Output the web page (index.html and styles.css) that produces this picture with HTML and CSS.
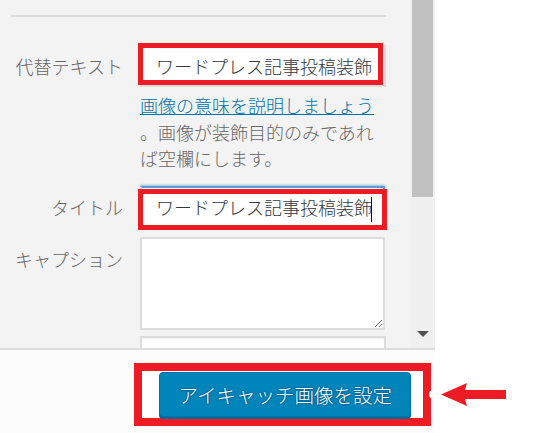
FILE: index.html
```html
<!DOCTYPE html>
<html lang="ja">
<head>
    <meta charset="UTF-8">
    <meta name="viewport" content="width=device-width, initial-scale=1.0">
    <title>アイキャッチ画像</title>
    <link rel="stylesheet" href="styles.css">
</head>
<body>
    <div class="frame">
        <div class="modal">
            <div class="panel">
                <div class="details">
                    <hr class="divider">

                    <div class="setting setting--alt">
                        <label class="setting-label">代替テキスト</label>
                        <div class="text-input">
                            ワードプレス記事投稿装飾
                            <span class="mark mark--alt"></span>
                        </div>
                    </div>

                    <p class="description"><a href="#">画像の意味を説明しましょう</a><br>。画像が装飾目的のみであれ<br>ば空欄にします。</p>

                    <div class="setting setting--title">
                        <label class="setting-label">タイトル</label>
                        <div class="text-input text-input--focus">
                            ワードプレス記事投稿装飾<span class="caret"></span>
                            <span class="mark mark--title"></span>
                        </div>
                    </div>

                    <div class="setting setting--caption">
                        <label class="setting-label">キャプション</label>
                        <textarea class="caption-input"></textarea>
                    </div>

                    <div class="setting setting--more">
                        <label class="setting-label"></label>
                        <div class="text-input"></div>
                    </div>
                </div>

                <div class="scrollbar">
                    <div class="scroll-thumb"></div>
                    <div class="scroll-arrow"></div>
                </div>
            </div>

            <div class="toolbar">
                <div class="button-wrap">
                    <button class="button-primary">アイキャッチ画像を設定</button>
                    <span class="handle"></span>
                </div>
            </div>
        </div>

        <!-- annotation arrow -->
        <svg class="arrow" width="66" height="23" viewBox="0 0 66 23">
            <path d="M0 11.5 L26 0 L24 7 L65 7 L65 16 L24 16 L26 23 Z" fill="#ed1c24"/>
        </svg>
    </div>
</body>
</html>
```

FILE: styles.css
```css
/* base */
body {
    margin: 0;
    background: #fff;
    font-family: "Noto Sans CJK JP", "Noto Sans", sans-serif;
    font-weight: 300;
}

.frame {
    position: relative;
    width: 549px;
    height: 433px;
    overflow: hidden;
}

.modal {
    width: 435px;
    height: 433px;
    display: flex;
    flex-direction: column;
}

/* panel + scrollbar */
.panel {
    height: 348px;
    display: flex;
    background: #f3f3f3;
    overflow: hidden;
}

.details {
    width: 375px;
    padding: 15px 25px 0 11px;
}

.divider {
    margin: 0;
    border: 0;
    height: 2px;
    background: #dddddd;
}

.setting {
    display: flex;
    align-items: center;
    gap: 17px;
}

.setting-label {
    width: 112px;
    flex: none;
    text-align: right;
    font-size: 18px;
    line-height: 26px;
    color: #666;
}

.setting--alt { margin-top: 28px; }
.setting--title { margin-top: 14px; }
.setting--caption { margin-top: 9px; align-items: flex-start; }
.setting--caption .setting-label { padding-top: 9px; }
.setting--more { margin-top: 6px; }

.text-input {
    position: relative;
    box-sizing: border-box;
    width: 246px;
    height: 42px;
    padding: 0 14px;
    border: 2px solid #dddddd;
    background: #fff;
    font-size: 18px;
    line-height: 38px;
    color: #32373c;
    white-space: nowrap;
    box-shadow: inset 0 1px 2px rgba(0,0,0,0.07);
}

.text-input--focus {
    width: 245px;
    border-color: #dddddd;
    border-top-color: #5b9dd9;
    border-right-color: #5b9dd9;
    box-shadow: 0 -1px 2px rgba(30,140,190,0.5);
}

.caret {
    display: inline-block;
    width: 1px;
    height: 25px;
    margin-left: -1px;
    background: #111;
    vertical-align: middle;
}

/* red annotation frames */
.mark {
    position: absolute;
    box-sizing: border-box;
    border: 5px solid #ed1c24;
}

.mark--alt {
    top: -4px;
    left: -4px;
    width: 245px;
    height: 42px;
}

.mark--title {
    top: 1px;
    left: -4px;
    width: 249px;
    height: 41px;
}

.description {
    margin: 5px 0 0 129px;
    font-size: 18px;
    line-height: 26.5px;
    color: #666;
    white-space: nowrap;
}

.description a {
    color: #0073aa;
}

.caption-input {
    box-sizing: border-box;
    width: 245px;
    height: 93px;
    margin: 0;
    border: 2px solid #dddddd;
    background: #fff;
    resize: vertical;
}

.scrollbar {
    width: 24px;
    flex: none;
    display: flex;
    flex-direction: column;
    background: #f0f0f0;
}

.scroll-thumb {
    width: 21px;
    height: 197px;
    margin-left: 1px;
    background: #c1c1c1;
}

.scroll-arrow {
    width: 0;
    height: 0;
    margin: auto 0 11px 6px;
    border-left: 6px solid transparent;
    border-right: 6px solid transparent;
    border-top: 6px solid #505050;
}

/* toolbar */
.toolbar {
    flex: 1;
    display: flex;
    justify-content: flex-end;
    align-items: flex-start;
    padding: 22px 24px 0 0;
    border-top: 2px solid #dddddd;
    background: #fcfcfc;
}

.button-wrap {
    position: relative;
    isolation: isolate;
}

.button-wrap::before {
    content: "";
    position: absolute;
    top: -9px;
    left: -25px;
    right: -20px;
    bottom: -9px;
    border: 8px solid #ed1c24;
    background: #fff;
    z-index: -1;
}

.button-primary {
    display: block;
    height: 45px;
    padding: 0 18px;
    border: 1px solid #0073aa;
    border-radius: 4px;
    background: #0085ba;
    box-shadow: 0 2px 0 #006799;
    color: #fff;
    font-family: inherit;
    font-weight: 300;
    font-size: 19.5px;
    line-height: 41px;
    text-shadow: 0 -1px 1px #006799, 1px 0 1px #006799, 0 1px 1px #006799, -1px 0 1px #006799;
}

.handle {
    position: absolute;
    left: 270px;
    top: 18px;
    width: 9px;
    height: 9px;
    border-radius: 50%;
    background: #fff;
}

.arrow {
    position: absolute;
    left: 441px;
    top: 383px;
}
```
